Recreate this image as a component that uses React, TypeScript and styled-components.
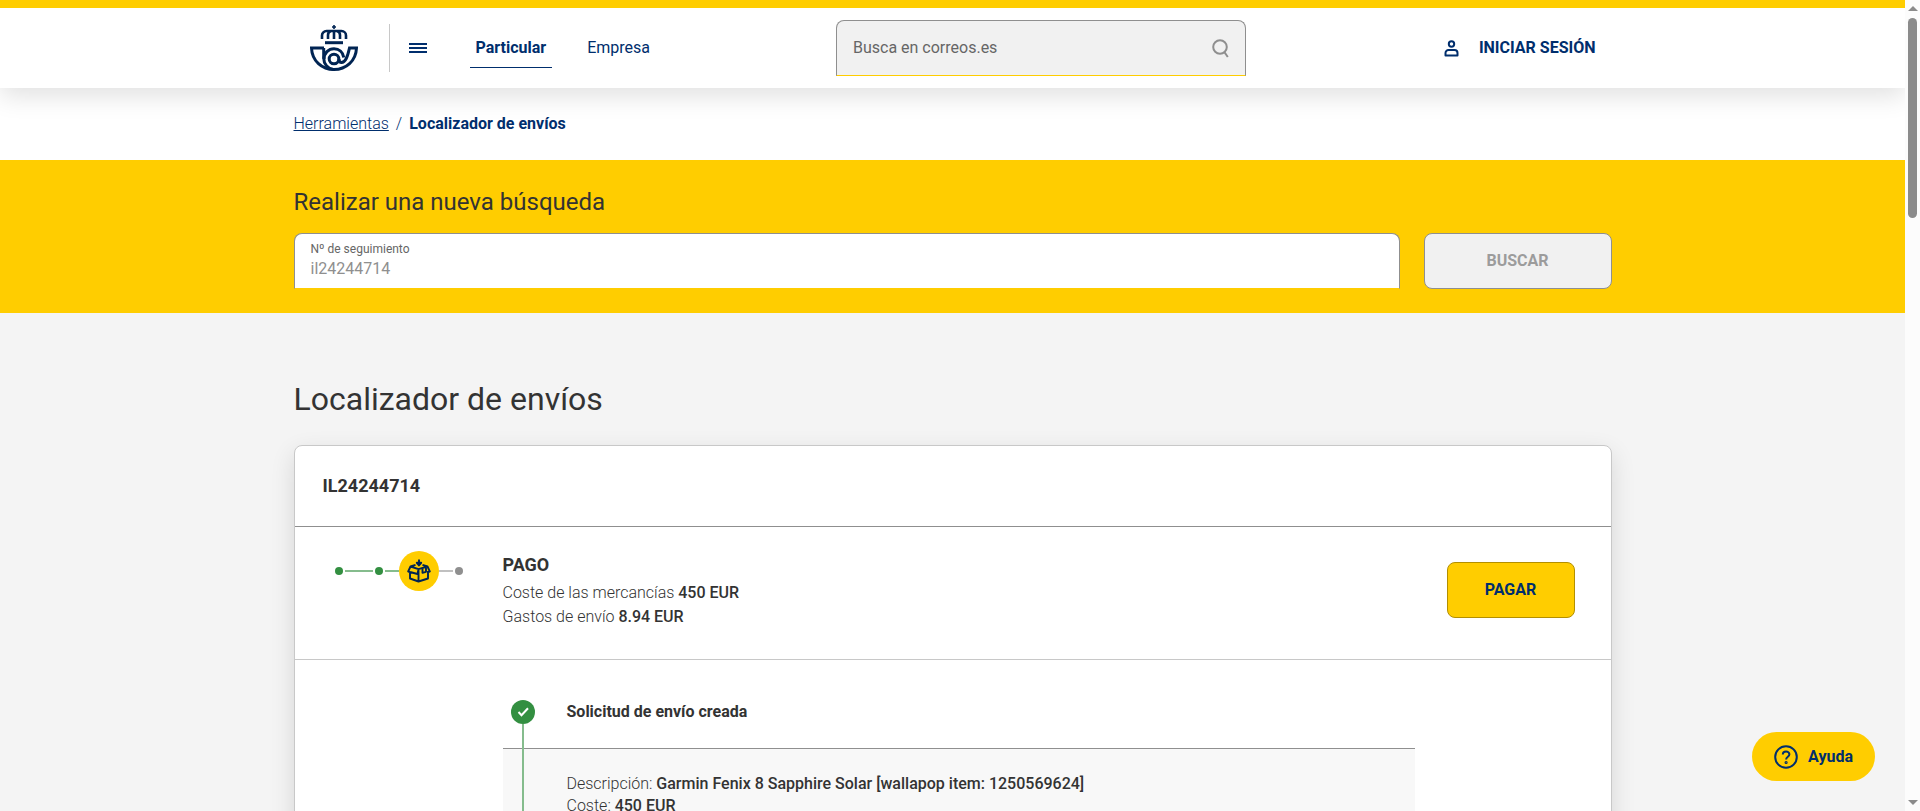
import React from 'react';
import styled, { createGlobalStyle } from 'styled-components';

const color = {
  yellow: '#ffcd00',
  navy: '#002e6d',
  logo: '#002453',
  ink: '#333333',
  mid: '#666666',
  gray: '#8f8f8f',
  line: '#c8c8c8',
  green: '#338f41',
  greenSoft: '#85bc8d',
  surface: '#f4f4f4',
  field: '#f1f1f1',
};

const GlobalStyle = createGlobalStyle`
  * { box-sizing: border-box; }
  body {
    margin: 0;
    font-family: Roboto, 'Open Sans', sans-serif;
    font-size: 16px;
    line-height: 24px;
    color: ${color.ink};
    background: ${color.surface};
  }
  button, input { font: inherit; }
  h1, h2, h3, p { margin: 0; }
`;

const Shell = styled.div`
  display: flex;
  height: 100vh;
`;

const Page = styled.div`
  flex: 1;
  min-width: 0;
  overflow: hidden auto;
  scrollbar-width: none;
`;

const Container = styled.div`
  width: 100%;
  max-width: 1318px;
  margin: 0 auto;
`;

/* Header */

const Header = styled.header`
  position: relative;
  border-top: 8px solid ${color.yellow};
  background: #fff;
  box-shadow: 0 8px 24px rgba(0, 0, 0, 0.12);
`;

const HeaderBar = styled(Container)`
  display: flex;
  align-items: center;
  height: 80px;
  padding: 0 16px;
`;

const LogoLink = styled.a`
  display: flex;
  padding-right: 31px;
  border-right: 1px solid ${color.line};
  color: ${color.logo};
`;

const IconButton = styled.button`
  display: flex;
  padding: 0;
  border: 0;
  background: none;
  color: ${color.navy};
  cursor: pointer;
`;

const MenuButton = styled(IconButton)`
  margin: 0 43px 0 19px;
`;

const Nav = styled.nav`
  display: flex;
  gap: 29px;
`;

const NavLink = styled.a<{ $active?: boolean }>`
  padding: 7px 6px;
  border-bottom: 1px solid ${(p) => (p.$active ? color.navy : 'transparent')};
  color: ${color.navy};
  font-weight: ${(p) => (p.$active ? 700 : 400)};
  text-decoration: none;
`;

const SiteSearch = styled.form`
  display: flex;
  align-items: center;
  width: 410px;
  height: 56px;
  margin: 0 auto 0 180px;
  padding: 0 16px;
  border: 1px solid ${color.gray};
  border-bottom-color: ${color.yellow};
  border-radius: 8px 8px 0 0;
  background: ${color.field};

  input {
    flex: 1;
    min-width: 0;
    padding: 0;
    border: 0;
    outline: 0;
    background: none;
    color: ${color.mid};
  }
  input::placeholder { color: ${color.mid}; opacity: 1; }
  button { color: ${color.gray}; }
`;

const LoginLink = styled.a`
  display: flex;
  align-items: center;
  gap: 20px;
  color: ${color.navy};
  font-weight: 700;
  text-decoration: none;
`;

/* Breadcrumb */

const BreadcrumbBar = styled.div`
  padding: 24px 0;
  background: #fff;
`;

const Breadcrumb = styled(Container)`
  display: flex;
  gap: 7px;
  color: ${color.navy};
  font-weight: 300;

  a { color: inherit; }
  strong { font-weight: 700; }
`;

/* New search */

const SearchBand = styled.section`
  padding: 26px 0 24px;
  background: ${color.yellow};
`;

const SearchTitle = styled.h2`
  margin-bottom: 15px;
  font-size: 24px;
  line-height: 32px;
  font-weight: 400;
`;

const SearchForm = styled.form`
  display: flex;
  gap: 24px;
`;

const TrackingField = styled.label`
  display: flex;
  flex: 1;
  flex-direction: column;
  height: 56px;
  padding: 6px 16px;
  border: 1px solid ${color.gray};
  border-bottom-color: ${color.yellow};
  border-radius: 8px 8px 0 0;
  background: #fff;
  color: ${color.mid};
  font-size: 12px;
  line-height: 18px;

  input {
    height: 20px;
    padding: 0;
    border: 0;
    outline: 0;
    background: none;
    color: ${color.gray};
    font-size: 16px;
  }
`;

const ActionButton = styled.button<{ $primary?: boolean }>`
  width: ${(p) => (p.$primary ? 128 : 188)}px;
  height: 56px;
  border: 1px solid ${(p) => (p.$primary ? '#b38f00' : color.gray)};
  border-radius: 8px;
  background: ${(p) => (p.$primary ? color.yellow : color.field)};
  color: ${(p) => (p.$primary ? color.navy : '#9c9c9c')};
  font-weight: 700;
`;

/* Shipment card */

const Results = styled(Container)`
  padding-top: 64px;
`;

const PageTitle = styled.h1`
  margin-bottom: 24px;
  font-size: 32px;
  line-height: 44px;
  font-weight: 400;
`;

const Card = styled.article`
  border: 1px solid ${color.line};
  border-radius: 8px;
  background: #fff;
  box-shadow: 0 8px 24px rgba(0, 0, 0, 0.12);
`;

const CardCode = styled.h2`
  padding: 28px;
  border-bottom: 1px solid ${color.gray};
  font-size: 18px;
  line-height: 24px;
  font-weight: 700;
`;

const StatusRow = styled.div`
  display: flex;
  padding: 24px 36px 30px 40px;
  border-bottom: 1px solid ${color.line};
`;

const Steps = styled.div`
  display: flex;
  align-items: center;
  width: 168px;
  height: 40px;
`;

const StepDot = styled.span<{ $done?: boolean }>`
  width: 8px;
  height: 8px;
  margin: 0 2px 0 0;
  border-radius: 50%;
  background: ${(p) => (p.$done ? color.green : color.gray)};
`;

const StepLine = styled.span<{ $done?: boolean; $short?: boolean }>`
  width: ${(p) => (p.$short ? 14 : 28)}px;
  height: 2px;
  margin-right: ${(p) => (p.$done && p.$short ? 0 : 2)}px;
  background: ${(p) => (p.$done ? color.greenSoft : '#c0c0c0')};
`;

const CurrentStep = styled.span`
  display: flex;
  align-items: center;
  justify-content: center;
  width: 40px;
  height: 40px;
  border-radius: 50%;
  background: ${color.yellow};
`;

const StatusText = styled.div`
  flex: 1;
  padding-top: 2px;
  font-weight: 300;

  h3 {
    margin-bottom: 4px;
    font-size: 18px;
    line-height: 24px;
    font-weight: 700;
  }
  strong { font-weight: 500; }
`;

const StatusAction = styled.div`
  padding: 11px 0;
`;

const Timeline = styled.div`
  width: 912px;
  max-width: 80%;
  margin-left: 208px;
  padding-top: 40px;
`;

const Event = styled.div`
  display: grid;
  grid-template-columns: 40px 1fr;
  column-gap: 24px;
`;

const EventHead = styled(Event)`
  font-weight: 700;

  h3 {
    padding-bottom: 24px;
    font-size: 16px;
    line-height: 24px;
  }
`;

const EventDetail = styled(Event)`
  border-top: 1px solid ${color.gray};
  background: #f8f8f8;
`;

const Track = styled.div`
  display: flex;
  flex-direction: column;
  align-items: center;
`;

const TrackLine = styled.span<{ $overlap?: boolean }>`
  flex: 1;
  width: 2px;
  margin-top: ${(p) => (p.$overlap ? -1 : 0)}px;
  background: ${color.greenSoft};
`;

const DetailText = styled.div`
  padding: 24px 0;
  font-weight: 300;
  line-height: 22px;

  strong { font-weight: 500; }
`;

/* Overlays */

const HelpButton = styled.button`
  position: fixed;
  right: 45px;
  bottom: 30px;
  display: flex;
  align-items: center;
  gap: 10px;
  height: 49px;
  padding: 0 22px;
  border: 0;
  border-radius: 25px;
  background: ${color.yellow};
  color: ${color.navy};
  font-weight: 700;
`;

const ScrollRail = styled.div`
  display: flex;
  flex-direction: column;
  align-items: center;
  justify-content: space-between;
  width: 15px;
  padding: 6px 0;
  background: #fcfcfc;
`;

const ScrollTop = styled.div`
  display: flex;
  flex-direction: column;
  align-items: center;
  gap: 7px;
`;

const ScrollArrow = styled.span<{ $down?: boolean }>`
  border: solid transparent;
  border-width: ${(p) => (p.$down ? '5px 5px 0' : '0 5px 5px')};
  border-${(p) => (p.$down ? 'top' : 'bottom')}-color: #8b8b8b;
`;

const ScrollThumb = styled.span`
  width: 9px;
  height: 200px;
  border-radius: 5px;
  background: #8b8b8b;
`;

const CorreosLogo = () => (
  <svg width="48" height="48" viewBox="0 0 48 48" fill="none" stroke="currentColor" aria-hidden="true">
    <path d="M24 1v4M22 3h4" strokeWidth="1.6" />
    <path d="M12 15v-3.500a4.500 4.500 0 0 1 4.500-4.500h15a4.500 4.500 0 0 1 4.500 4.500V15M18 15v-4q0-3 3-4M30 15v-4q0-3-3-4M24 6v9" strokeWidth="2.6" />
    <path d="M15 18.700h18" strokeWidth="3" />
    <path d="M14 24H1.500C2 37 12 45.500 24 45.500S46 37 46.500 24H39.500C37.500 33 35.500 38.500 31.500 38.500c-2.500 0-2.500-2-2.500-3.500" strokeWidth="3" />
    <path d="M13.700 24v10c0 6 4 10.500 9.500 11.500" strokeWidth="3" />
    <path d="M14 35c0-6 4.500-10.300 10-10.300 5 0 9 3.300 9.800 8.800" strokeWidth="3" />
    <circle cx="24" cy="35" r="4.800" strokeWidth="3" />
  </svg>
);

const MenuIcon = () => (
  <svg width="18" height="10" viewBox="0 0 18 10" fill="currentColor" aria-hidden="true">
    <path d="M0 0h18v2H0zM0 4h18v2H0zM0 8h18v2H0z" />
  </svg>
);

const SearchIcon = () => (
  <svg width="17" height="19" viewBox="0 0 17 19" fill="none" stroke="currentColor" strokeWidth="2" aria-hidden="true">
    <circle cx="8" cy="8" r="6.800" />
    <path d="M12.300 13l3.500 5" />
  </svg>
);

const UserIcon = () => (
  <svg width="15" height="17" viewBox="0 0 15 17" fill="none" stroke="currentColor" strokeWidth="2" aria-hidden="true">
    <circle cx="7.500" cy="4" r="2.700" />
    <path d="M1.500 15.500V13a3 3 0 0 1 3-3h6a3 3 0 0 1 3 3v2.500z" strokeLinejoin="round" />
  </svg>
);

const BoxIcon = () => (
  <svg width="24" height="24" viewBox="0 0 24 24" fill="none" stroke={color.logo} strokeWidth="1.900" strokeLinejoin="round" aria-hidden="true">
    <path d="M8.500 5.800 3.500 7.500 1.200 12.500 3 13M15.500 5.800l5 1.700 2.300 5L21 13M3.500 7.500l8 2.700 9-2.700M11.500 10.200 10.500 15 3 13v6.500l8.500 3L21 19.500V12M11.500 10.200v12.300" />
    <path d="M15.500 9.500v4.300l3.500-1V8.500" />
    <path d="M12 .5v4" />
    <path d="M9.800 3.800h4.400L12 6.500z" fill={color.logo} />
  </svg>
);

const CheckIcon = () => (
  <svg width="24" height="24" viewBox="0 0 24 24" aria-hidden="true">
    <circle cx="12" cy="12" r="12" fill={color.green} />
    <path d="M7.500 12l3 3.200 6.500-7" fill="none" stroke="#fff" strokeWidth="2" />
  </svg>
);

const HelpIcon = () => (
  <svg width="24" height="24" viewBox="0 0 24 24" fill="none" stroke="currentColor" strokeWidth="2" aria-hidden="true">
    <circle cx="12" cy="12" r="10.800" />
    <path d="M8.800 9.500c0-4 6.600-3.800 6.600-.2 0 2.400-3.300 2.500-3.300 5.200" />
    <circle cx="12.100" cy="17.500" r=".6" />
  </svg>
);

export default function App() {
  return (
    <Shell>
      <GlobalStyle />
      <Page>
        <Header>
          <HeaderBar>
            <LogoLink href="#" aria-label="Correos"><CorreosLogo /></LogoLink>
            <MenuButton type="button" aria-label="Menú"><MenuIcon /></MenuButton>
            <Nav>
              <NavLink href="#particular" $active>Particular</NavLink>
              <NavLink href="#empresa">Empresa</NavLink>
            </Nav>
            <SiteSearch role="search">
              <input type="text" placeholder="Busca en correos.es" aria-label="Busca en correos.es" />
              <IconButton type="button" aria-label="Buscar"><SearchIcon /></IconButton>
            </SiteSearch>
            <LoginLink href="#login"><UserIcon />INICIAR SESIÓN</LoginLink>
          </HeaderBar>
        </Header>

        <BreadcrumbBar>
          <Breadcrumb as="nav">
            <a href="#herramientas">Herramientas</a>
            <span>/</span>
            <strong>Localizador de envíos</strong>
          </Breadcrumb>
        </BreadcrumbBar>

        <SearchBand>
          <Container>
            <SearchTitle>Realizar una nueva búsqueda</SearchTitle>
            <SearchForm>
              <TrackingField>
                Nº de seguimiento
                <input type="text" defaultValue="il24244714" />
              </TrackingField>
              <ActionButton type="submit" disabled>BUSCAR</ActionButton>
            </SearchForm>
          </Container>
        </SearchBand>

        <Results as="main">
          <PageTitle>Localizador de envíos</PageTitle>
          <Card>
            <CardCode>IL24244714</CardCode>
            <StatusRow>
              <Steps>
                <StepDot $done />
                <StepLine $done />
                <StepDot $done />
                <StepLine $done $short />
                <CurrentStep><BoxIcon /></CurrentStep>
                <StepLine $short />
                <StepDot />
              </Steps>
              <StatusText>
                <h3>PAGO</h3>
                <p>Coste de las mercancías <strong>450 EUR</strong></p>
                <p>Gastos de envío <strong>8.94 EUR</strong></p>
              </StatusText>
              <StatusAction>
                <ActionButton type="button" $primary>PAGAR</ActionButton>
              </StatusAction>
            </StatusRow>
            <Timeline>
              <EventHead>
                <Track><CheckIcon /><TrackLine /></Track>
                <h3>Solicitud de envío creada</h3>
              </EventHead>
              <EventDetail>
                <Track><TrackLine $overlap /></Track>
                <DetailText>
                  <p>Descripción: <strong>Garmin Fenix 8 Sapphire Solar [wallapop item: 1250569624]</strong></p>
                  <p>Coste: <strong>450 EUR</strong></p>
                </DetailText>
              </EventDetail>
            </Timeline>
          </Card>
        </Results>
      </Page>
      <ScrollRail aria-hidden="true">
        <ScrollTop>
          <ScrollArrow />
          <ScrollThumb />
        </ScrollTop>
        <ScrollArrow $down />
      </ScrollRail>
      <HelpButton type="button"><HelpIcon />Ayuda</HelpButton>
    </Shell>
  );
}
